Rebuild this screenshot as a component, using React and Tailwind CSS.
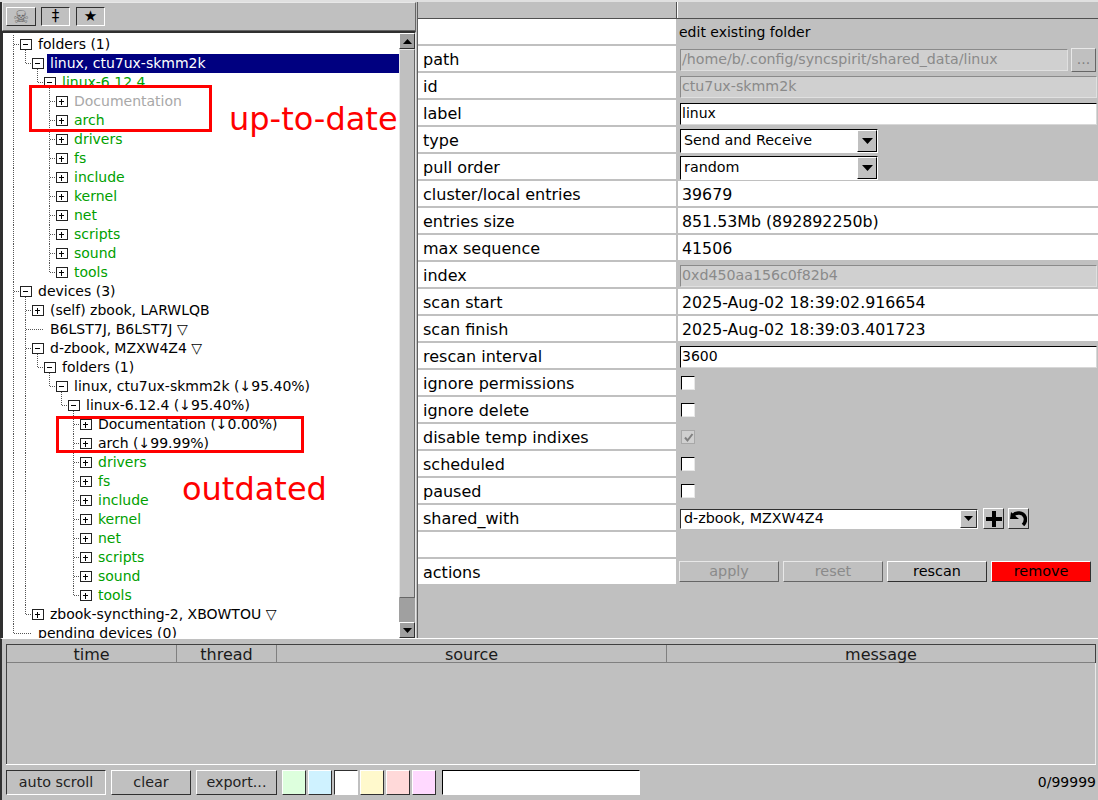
import React from 'react';

const GREEN = 'text-[#00a000]';

// depth, label, box (+ / - / none), colour
const treeRows = [
  [0, 'folders (1)', '-'],
  [1, 'linux, ctu7ux-skmm2k', '-', 'selected'],
  [2, 'linux-6.12.4', '-', GREEN],
  [3, 'Documentation', '+', 'text-[#a8a8a8]'],
  [3, 'arch', '+', GREEN],
  [3, 'drivers', '+', GREEN],
  [3, 'fs', '+', GREEN],
  [3, 'include', '+', GREEN],
  [3, 'kernel', '+', GREEN],
  [3, 'net', '+', GREEN],
  [3, 'scripts', '+', GREEN],
  [3, 'sound', '+', GREEN],
  [3, 'tools', '+', GREEN],
  [0, 'devices (3)', '-'],
  [1, '(self) zbook, LARWLQB', '+'],
  [1, 'B6LST7J, B6LST7J ▽', ''],
  [1, 'd-zbook, MZXW4Z4 ▽', '-'],
  [2, 'folders (1)', '-'],
  [3, 'linux, ctu7ux-skmm2k (↓95.40%)', '-'],
  [4, 'linux-6.12.4 (↓95.40%)', '-'],
  [5, 'Documentation (↓0.00%)', '+'],
  [5, 'arch (↓99.99%)', '+'],
  [5, 'drivers', '+', GREEN],
  [5, 'fs', '+', GREEN],
  [5, 'include', '+', GREEN],
  [5, 'kernel', '+', GREEN],
  [5, 'net', '+', GREEN],
  [5, 'scripts', '+', GREEN],
  [5, 'sound', '+', GREEN],
  [5, 'tools', '+', GREEN],
  [1, 'zbook-syncthing-2, XBOWTOU ▽', '+'],
  [0, 'pending devices (0)', ''],
];

// does another sibling at this depth follow row i?
function hasNextSibling(i, depth) {
  for (let j = i + 1; j < treeRows.length; j++) {
    if (treeRows[j][0] < depth) return false;
    if (treeRows[j][0] === depth) return true;
  }
  return false;
}

function Connectors({ index, depth, box }) {
  const lines = [];
  const vx = (d) => 13.5 + 12 * d;
  for (let d = 0; d < depth; d++) {
    if (hasNextSibling(index, d)) {
      lines.push(<line key={d} x1={vx(d)} x2={vx(d)} y1="0" y2="19" />);
    }
  }
  const x = vx(depth);
  lines.push(<line key="up" x1={x} x2={x} y1="0" y2={hasNextSibling(index, depth) ? 19 : 10} />);
  lines.push(<line key="across" x1={x} x2={box ? x + 7 : x + 18} y1="9.5" y2="9.5" />);
  if (box === '-') {
    lines.push(<line key="down" x1={x + 12} x2={x + 12} y1="15" y2="19" />);
  }
  return (
    <svg width={38 + 12 * depth} height="19" className="shrink-0" aria-hidden="true">
      <g stroke="#555" strokeWidth="1" strokeDasharray="1 1" shapeRendering="crispEdges">{lines}</g>
      {box && (
        <g transform={`translate(${x + 6.5} 4.5)`} shapeRendering="crispEdges">
          <rect x="0" y="0" width="11" height="10" fill="#fff" stroke="#222" />
          <line x1="3" x2="8" y1="5" y2="5" stroke="#000" />
          {box === '+' && <line x1="5.5" x2="5.5" y1="2" y2="8" stroke="#000" />}
        </g>
      )}
    </svg>
  );
}

function TreeRow({ row, index }) {
  const [depth, label, box, colour] = row;
  const selected = colour === 'selected';
  return (
    <div className={`flex items-center h-[19px] shrink-0 whitespace-nowrap ${selected ? '' : colour || 'text-black'}`}>
      <Connectors index={index} depth={depth} box={box} />
      {selected ? (
        <span className="ml-[-3px] pl-[3px] flex-1 h-[19px] leading-[19px] bg-[#000080] text-white">{label}</span>
      ) : (
        <span className="leading-[19px]">{label}</span>
      )}
    </div>
  );
}

const upBox = 'border border-t-white border-l-white border-r-[#303030] border-b-[#303030]';
const downBox = 'border border-t-[#303030] border-l-[#303030] border-r-white border-b-white';
const softUp = 'border border-t-[#e8e8e8] border-l-[#e8e8e8] border-r-[#666] border-b-[#666]';
const inputBox = 'border border-t-black border-l-black border-r-[#d8d8d8] border-b-[#d8d8d8]';

function ToolButton({ children, down, dim, size = 'w-[30px]' }) {
  return (
    <div className={`${size} h-[19px] flex items-center justify-center text-[15px] leading-none ${down ? downBox : upBox} ${dim ? 'text-[#666]' : 'text-black'}`}>
      {children}
    </div>
  );
}

function ScrollButton({ up }) {
  return (
    <div className={`h-[16px] shrink-0 flex items-center justify-center ${upBox}`}>
      <svg width="9" height="5" viewBox="0 0 9 5" aria-hidden="true">
        <polygon points={up ? '4.5,0 9,5 0,5' : '0,0 9,0 4.5,5'} fill="#000" />
      </svg>
    </div>
  );
}

function LeftPane() {
  return (
    <div className="w-[416px] shrink-0 flex flex-col border-l-2 border-l-[#303030]">
      <div className={`h-[29px] shrink-0 flex items-center gap-[5px] pl-[3px] ${softUp}`}>
        <ToolButton dim>
          <span className="text-[18px]">☠</span>
        </ToolButton>
        <ToolButton down size="w-[29px]">‡</ToolButton>
        <ToolButton down size="w-[29px] ml-[1px]">★</ToolButton>
      </div>
      <div className="relative flex-1 min-h-0 flex border-t-2 border-t-[#303030] border-l border-l-[#303030] border-r border-r-[#e8e8e8] bg-white overflow-hidden">
        <div className="flex-1 min-w-0 flex flex-col pt-[2px] -ml-[3px] overflow-hidden text-[14px]">
          {treeRows.map((row, i) => (
            <TreeRow key={i} row={row} index={i} />
          ))}
        </div>
        <div className="w-[16px] shrink-0 flex flex-col bg-[#a0a0a0]">
          <ScrollButton up />
          <div className={`h-[549px] shrink-0 bg-[#c0c0c0] ${softUp}`} />
          <div className="flex-1" />
          <ScrollButton />
        </div>
        <div className="absolute left-[26px] top-[52px] w-[183px] h-[47px] border-[3px] border-[#ff0000]" />
        <div className="absolute left-[53px] top-[383px] w-[248px] h-[37px] border-[3px] border-[#ff0000]" />
        <div className="absolute left-[226px] top-[63px] text-[32px] leading-[46px] text-[#ff0000] whitespace-nowrap">up-to-date</div>
        <div className="absolute left-[179px] top-[433px] text-[32px] leading-[46px] text-[#ff0000] whitespace-nowrap">outdated</div>
      </div>
    </div>
  );
}

function Field({ value, disabled, width = 'w-[417px]' }) {
  return (
    <div className={`h-[22px] ${width} flex items-center px-[1px] overflow-hidden whitespace-nowrap ${disabled ? 'bg-[#d0d0d0] text-[#8a8a8a] text-[14.2px] border border-t-[#8a8a8a] border-l-[#8a8a8a] border-r-[#e0e0e0] border-b-[#e0e0e0]' : `bg-white text-black ${inputBox}`}`}>
      {value}
    </div>
  );
}

function Select({ value, width, small }) {
  return (
    <div className={`${width} ${small ? 'h-[20px]' : 'h-[24px] mt-[1px]'} flex items-stretch text-[14.3px] ${downBox} ${small ? 'border-t-[#303030]' : 'border-t-black border-l-black'}`}>
      <div className={`flex-1 bg-white pl-[3px] flex whitespace-nowrap ${small ? 'items-start leading-[16px]' : 'items-center'}`}>{value}</div>
      <div className={`${small ? 'w-[17px]' : 'w-[20px] border-r-black border-b-black'} flex items-center justify-center ${upBox}`}>
        <svg width={small ? 9 : 11} height={small ? 5 : 6} viewBox="0 0 11 6" aria-hidden="true">
          <polygon points="0,0 11,0 5.5,6" fill="#000" />
        </svg>
      </div>
    </div>
  );
}

function Check({ checked }) {
  return (
    <div className={`ml-[1px] -mt-[1px] w-[14px] h-[14px] flex items-center justify-center ${checked ? 'bg-[#d0d0d0] border border-[#a8a8a8]' : `bg-white ${inputBox} border-r-[#e8e8e8] border-b-[#e8e8e8]`}`}>
      {checked && (
        <svg width="11" height="11" viewBox="0 0 11 11" aria-hidden="true">
          <path d="M2 5.5 L4.5 8.5 L9.5 2" fill="none" stroke="#808080" strokeWidth="2" />
        </svg>
      )}
    </div>
  );
}

function ActionButton({ children, disabled, danger }) {
  return (
    <div className={`w-[100px] h-[21px] flex items-center justify-center leading-none text-[14.4px] ${disabled ? `${softUp} text-[#8a8a8a]` : upBox} ${danger ? 'bg-[#ff0000] text-black' : ''}`}>
      {children}
    </div>
  );
}

function Row({ label, white, children }) {
  return (
    <div className="h-[27px] shrink-0 flex">
      <div className="w-[258px] h-[25px] shrink-0 bg-white flex items-center pl-[5px] pt-[2px] text-[16px] text-black">{label}</div>
      {white ? (
        <div className="flex-1 h-[25px] ml-[2px] bg-white flex items-center pl-[4px] pt-[2px] text-[15.8px] text-black">{children}</div>
      ) : (
        <div className="flex-1 ml-[2px] flex items-center pl-[2px] gap-[3px]">{children}</div>
      )}
    </div>
  );
}

function RightPane() {
  return (
    <div className="flex-1 min-w-0 flex flex-col ml-[1px] text-[14px] border-l border-l-[#606060]">
      <div className="h-[17px] shrink-0 flex border-b border-b-[#505050]">
        <div className="w-[259px] shrink-0 border-r border-r-[#505050]" />
        <div className="flex-1 border-l border-l-white" />
      </div>
      <Row label=""><span className="ml-[-1px]">edit existing folder</span></Row>
      <Row label="path">
        <Field disabled width="w-[388px]" value="/home/b/.config/syncspirit/shared_data/linux" />
        <div className={`w-[25px] h-[24px] flex items-center justify-center text-[#808080] ${softUp}`}>...</div>
      </Row>
      <Row label="id"><Field disabled value="ctu7ux-skmm2k" /></Row>
      <Row label="label"><Field value="linux" /></Row>
      <Row label="type"><Select width="w-[198px]" value="Send and Receive" /></Row>
      <Row label="pull order"><Select width="w-[198px]" value="random" /></Row>
      <Row label="cluster/local entries" white>39679</Row>
      <Row label="entries size" white>851.53Mb (892892250b)</Row>
      <Row label="max sequence" white>41506</Row>
      <Row label="index"><Field disabled value="0xd450aa156c0f82b4" /></Row>
      <Row label="scan start" white>2025-Aug-02 18:39:02.916654</Row>
      <Row label="scan finish" white>2025-Aug-02 18:39:03.401723</Row>
      <Row label="rescan interval"><Field value="3600" /></Row>
      <Row label="ignore permissions"><Check /></Row>
      <Row label="ignore delete"><Check /></Row>
      <Row label="disable temp indixes"><Check checked /></Row>
      <Row label="scheduled"><Check /></Row>
      <Row label="paused"><Check /></Row>
      <Row label="shared_with">
        <Select small width="w-[298px]" value="d-zbook, MZXW4Z4" />
        <div className={`ml-[2px] w-[21px] h-[21px] flex items-center justify-center ${upBox}`}>
          <svg width="16" height="16" viewBox="0 0 16 16" aria-hidden="true">
            <path d="M6 0 H10 V6 H16 V10 H10 V16 H6 V10 H0 V6 H6 Z" fill="#000" />
          </svg>
        </div>
        <div className={`w-[21px] h-[21px] ml-[1px] flex items-center justify-center ${upBox}`}>
          <svg width="17" height="15" viewBox="0 0 17 15" aria-hidden="true">
            <polygon points="0,8 1,1 9,8" fill="#000" />
            <path d="M3 4.5 C6 1 13 1 15 6 C16 9 15 12 13 14" fill="none" stroke="#000" strokeWidth="3.5" />
          </svg>
        </div>
      </Row>
      <Row label="" />
      <Row label="actions">
        <div className="flex gap-[4px] -ml-[1px] mb-[2px]">
          <ActionButton disabled>apply</ActionButton>
          <ActionButton disabled>reset</ActionButton>
          <ActionButton>rescan</ActionButton>
          <ActionButton danger>remove</ActionButton>
        </div>
      </Row>
    </div>
  );
}

const logColumns = [
  ['time', 'w-[170px]'],
  ['thread', 'w-[100px]'],
  ['source', 'w-[390px]'],
  ['message', 'flex-1'],
];

const swatches = ['bg-[#ddffdd]', 'bg-[#cff2ff]', 'bg-white', 'bg-[#fff9cc]', 'bg-[#ffd9d9]', 'bg-[#ffd9ff]'];

function LogPane() {
  return (
    <div className="flex-1 min-h-0 flex flex-col border-t border-t-white border-l-2 border-l-[#303030]">
      <div className="flex-1 min-h-0 flex flex-col mt-[5px] ml-[4px] mr-[2px] mb-[5px] border-b border-b-white">
        <div className="h-[19px] shrink-0 flex border-t border-t-[#404040] border-l border-l-[#404040] border-r border-r-[#404040]">
          {logColumns.map(([name, width]) => (
            <div key={name} className={`${width} flex items-center justify-center pt-[2px] text-[16px] border-r border-r-[#808080] border-b border-b-[#808080] leading-none text-[#1a1a1a] last:border-r-0`}>
              {name}
            </div>
          ))}
        </div>
        <div className="flex-1 border-l border-l-[#404040] border-r border-r-[#e8e8e8]" />
      </div>
      <div className="h-[25px] mb-[5px] shrink-0 flex items-stretch ml-[4px] mr-[2px] text-[14.3px] text-[#222]">
        <div className={`w-[100px] flex items-center justify-center ${downBox}`}>auto scroll</div>
        <div className={`w-[80px] ml-[5px] flex items-center justify-center ${upBox}`}>clear</div>
        <div className={`w-[81px] ml-[5px] flex items-center justify-center ${upBox}`}>export...</div>
        <div className="flex ml-[5px] gap-[2px]">
          {swatches.map((colour, i) => (
            <div key={i} className={`w-[24px] ${colour} ${i === 2 ? downBox : upBox}`} />
          ))}
        </div>
        <div className={`w-[198px] ml-[6px] bg-white ${downBox} border-t-black border-l-black`} />
        <div className="flex-1 flex items-center justify-end text-[14px] text-black">0/99999</div>
      </div>
    </div>
  );
}

export default function App() {
  return (
    <div className="w-[1098px] h-[800px] overflow-hidden flex flex-col bg-[#c0c0c0] font-['DejaVu_Sans',sans-serif] text-[14px] text-black">
      <div className="h-[638px] shrink-0 flex border-t-2 border-t-[#e0e0e0] overflow-hidden">
        <LeftPane />
        <RightPane />
      </div>
      <LogPane />
    </div>
  );
}
